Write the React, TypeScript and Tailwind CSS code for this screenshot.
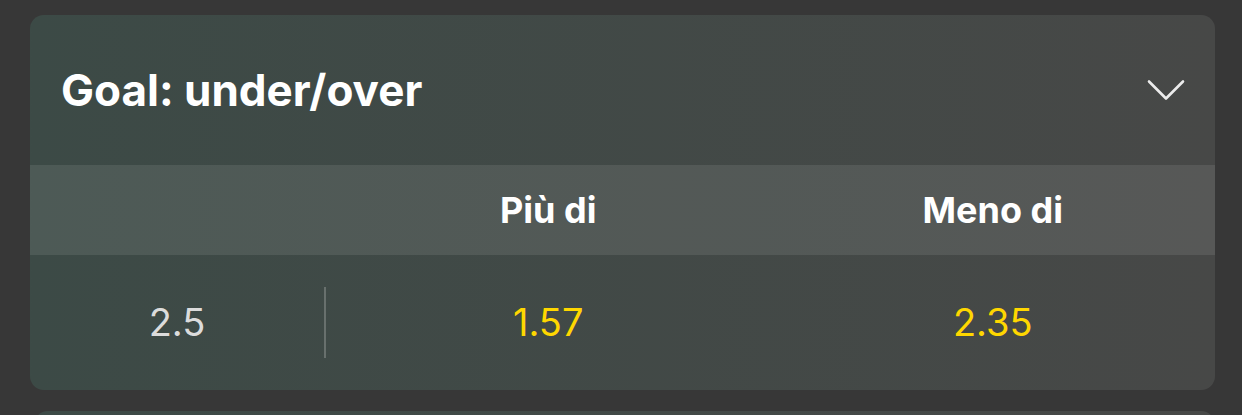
import React from "react";

const Chevron = () => (
  <svg width="38" height="22" viewBox="0 0 38 22" fill="none">
    <path
      d="M2 2.5 L19 19.5 L36 2.5"
      stroke="#ececec"
      strokeWidth="2.6"
      strokeLinecap="round"
      strokeLinejoin="round"
    />
  </svg>
);

const MARKETS = [{ line: "2.5", over: "1.57", under: "2.35" }];

export default function App() {
  return (
    <div
      className="w-full h-[415px] bg-[#373737] pl-[30px] pr-[27px] pt-[15px] overflow-hidden"
      style={{ fontFamily: "Inter, 'Liberation Sans', sans-serif" }}
    >
      <div className="rounded-[14px] overflow-hidden bg-linear-to-r from-[#3c4a46] to-[#474847]">
        <div className="h-[150px] flex items-center justify-between pl-[31px] pr-[30px]">
          <h2 className="text-[44px] font-bold text-white">Goal: under/over</h2>
          <Chevron />
        </div>

        <div className="h-[90px] grid grid-cols-[294px_2px_1fr_1fr] items-center bg-white/[0.09] text-white text-[36px] font-bold">
          <div />
          <div />
          <div className="text-center">Più di</div>
          <div className="text-center">Meno di</div>
        </div>

        {MARKETS.map(({ line, over, under }) => (
          <div
            key={line}
            className="h-[135px] grid grid-cols-[294px_2px_1fr_1fr] items-center text-[38px]"
          >
            <div className="text-center text-[#dcdcdc]">{line}</div>
            <div className="h-[71px] bg-[#68706d]" />
            <div className="text-center text-[#ffd700]">{over}</div>
            <div className="text-center text-[#ffd700]">{under}</div>
          </div>
        ))}
      </div>

      <div className="mt-[21px] ml-[4px] h-[40px] rounded-t-[14px] bg-linear-to-r from-[#3c4a46] to-[#474847]" />
    </div>
  );
}
